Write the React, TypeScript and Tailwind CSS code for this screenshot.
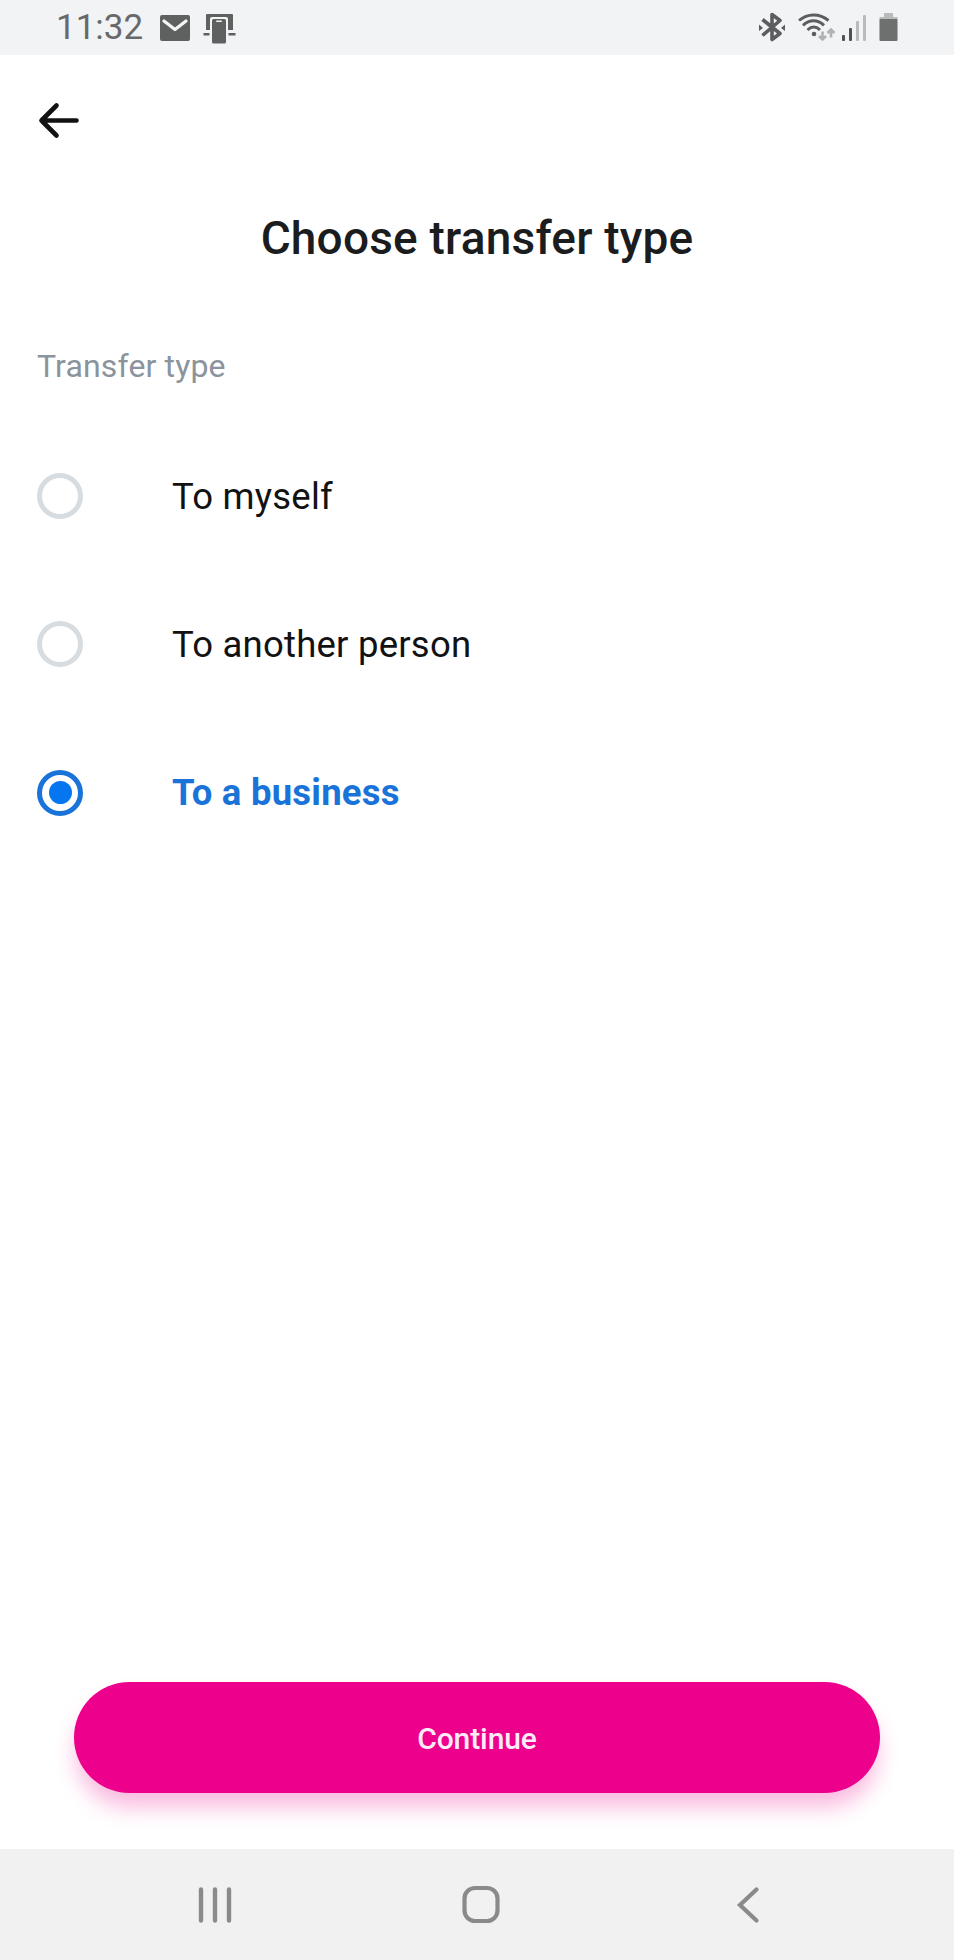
import { useState } from "react";

const options = ["To myself", "To another person", "To a business"];

function StatusBar() {
  return (
    <div className="flex h-[55px] items-center justify-between bg-[#f2f3f5] pr-[55px] pl-[56px]">
      <div className="flex items-center">
        <span className="w-[104px] pt-px text-[35px] leading-[54px] text-[#68696b]">
          11:32
        </span>
        <svg width="30" height="26" viewBox="0 0 30 26" fill="none">
          <rect width="30" height="26" rx="2" fill="#5f6161" />
          <path d="M4 6l11 8.500L26 6" stroke="#f5f6f8" strokeWidth="3.200" strokeLinecap="round" strokeLinejoin="round" />
        </svg>
        <svg className="ml-[13px]" width="34" height="32" viewBox="0 0 34 32" fill="#5f6161">
          <path d="M4 2h25a1 1 0 0 1 1 1v15h-5V7a2 2 0 0 0-2-2H9a2 2 0 0 0-2 2v11H3V3a1 1 0 0 1 1-1z" />
          <rect x="0.500" y="21" width="6" height="2.500" />
          <rect x="25.500" y="21" width="7" height="2.500" />
          <rect x="9" y="7" width="14" height="24.500" rx="1.500" />
          <rect x="13" y="8.500" width="6" height="1.500" rx="0.700" fill="#f1f2f5" />
        </svg>
      </div>
      <div className="flex items-center">
        <svg width="28" height="32" viewBox="0 0 28 32" fill="none">
          <path d="M4.500 7.500L22 21.500l-8 6v-25l8 6L4.500 23.500" stroke="#5c5d5f" strokeWidth="3.600" strokeLinejoin="round" />
          <path d="M1 12.500l4 3.500-4 3zM27 12.500l-4 3.500 4 3z" fill="#5c5d5f" />
        </svg>
        <svg className="ml-3" width="38" height="32" viewBox="0 0 38 32" fill="none">
          <g stroke="#5c5d5f" strokeWidth="3">
            <path d="M1 8.500C9.500 1 21.500 1 30.500 8.500" />
            <path d="M5 13.300c6.500-6 14.500-6 21 0" />
            <path d="M9.500 18c4-3.800 8.500-3.800 12.500 0" />
          </g>
          <circle cx="16" cy="22" r="2.300" fill="#5c5d5f" />
          <path d="M24.500 19.500V27M21 24l3.500 3.500L28 24M33 25.500V18M29.500 21l3.500-3.500 3.500 3.500" stroke="#b0b1b3" strokeWidth="2.600" />
        </svg>
        <svg className="ml-[6px]" width="26" height="32" viewBox="0 0 26 32">
          <rect x="0" y="23" width="3" height="6" rx="1" fill="#505153" />
          <rect x="7" y="16" width="3" height="13" rx="1" fill="#505153" />
          <rect x="14" y="9" width="3" height="20" rx="1" fill="#b9babc" />
          <rect x="21" y="3" width="3" height="26" rx="1" fill="#b9babc" />
        </svg>
        <svg className="ml-[11px]" width="20" height="32" viewBox="0 0 20 32">
          <path d="M5 1h9v4h4.500v3H.5V5H5z" fill="#b9babc" />
          <rect x="0.500" y="7" width="18" height="22" rx="1" fill="#6e6f6f" />
        </svg>
      </div>
    </div>
  );
}

function Radio({ checked }: { checked: boolean }) {
  return (
    <span
      className={`flex size-[46px] shrink-0 items-center justify-center rounded-full border-5 ${
        checked ? "border-[#1a73d8]" : "border-[#d7dce0]"
      }`}
    >
      {checked && <span className="size-[23px] rounded-full bg-[#0676f0]" />}
    </span>
  );
}

function NavBar() {
  return (
    <nav className="flex h-[111px] items-center bg-[#f1f1f1] pl-[198px]">
      <svg width="34" height="40" viewBox="0 0 34 40" stroke="#8a8a8a" strokeWidth="4.400" strokeLinecap="round">
        <path d="M3 4.500v31M17 4.500v31M31 4.500v31" />
      </svg>
      <svg className="ml-[230px]" width="38" height="40" viewBox="0 0 38 40" fill="none">
        <rect x="2.500" y="3" width="33" height="33" rx="10.500" stroke="#8a8a8a" strokeWidth="4.200" />
      </svg>
      <svg className="ml-[236px]" width="24" height="40" viewBox="0 0 24 40" fill="none">
        <path d="M20.500 4.500L4 20 20.500 35.500" stroke="#8a8a8a" strokeWidth="4.200" strokeLinecap="round" />
      </svg>
    </nav>
  );
}

export default function App() {
  const [selected, setSelected] = useState("To a business");

  return (
    <div className="flex h-[1960px] w-[954px] flex-col bg-white font-[Roboto,sans-serif] text-[#1b1c1e]">
      <StatusBar />
      <main className="flex grow flex-col">
        <button className="mt-[46px] ml-[38px] size-fit" aria-label="Back">
          <svg width="42" height="38" viewBox="0 0 42 38" fill="none">
            <path d="M38.500 19.500H3.500M18.500 4.500L3.500 19.500l15 15" stroke="#121212" strokeWidth="4.600" strokeLinecap="round" strokeLinejoin="round" />
          </svg>
        </button>
        <h1 className="mt-[69px] text-center text-[46px] leading-[60px] font-medium tracking-[0.2px]">
          Choose transfer type
        </h1>
        <p className="mt-[78px] ml-[37px] text-[32px] leading-[40px] tracking-[0.15px] text-[#8b939c]">
          Transfer type
        </p>
        <div className="mt-[36px] flex flex-col">
          {options.map((option) => (
            <button
              key={option}
              onClick={() => setSelected(option)}
              className="flex h-[148.300px] items-center gap-[89px] pl-[37px] text-left"
            >
              <Radio checked={option === selected} />
              <span
                className={`pt-px text-[36.500px] leading-[44px] tracking-[0.22px] ${
                  option === selected ? "font-bold text-[#1a73d8]" : "text-[#121212]"
                }`}
              >
                {option}
              </span>
            </button>
          ))}
        </div>
        <button className="mx-[74px] mt-auto mb-14 h-[111px] rounded-full bg-[#ec008c] pt-px text-[30px] font-medium tracking-[-0.1px] text-[#ffeaf8] shadow-[0_16px_22px_-2px_rgba(236,0,140,0.28)]">
          Continue
        </button>
      </main>
      <NavBar />
    </div>
  );
}
